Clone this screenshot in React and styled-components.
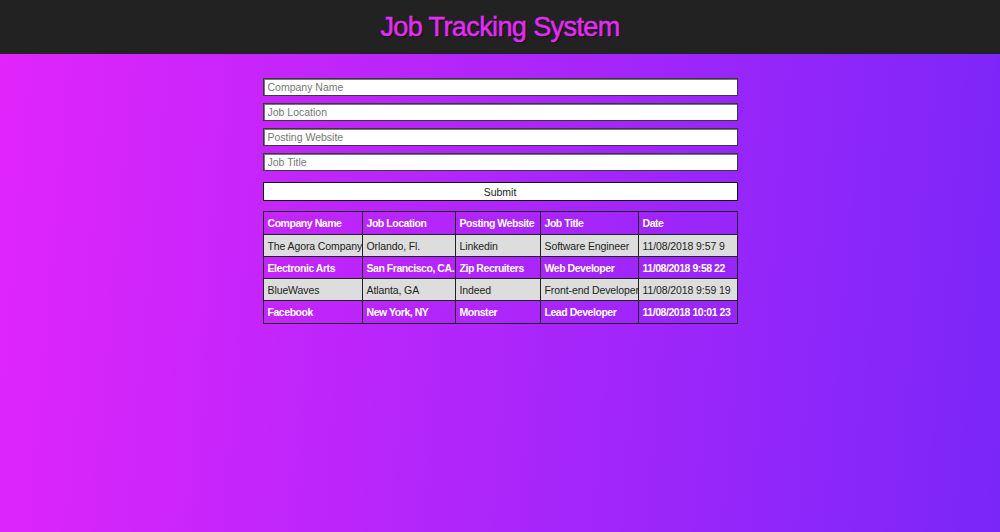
import React from "react";
import styled, { createGlobalStyle } from "styled-components";

const Global = createGlobalStyle`
  html, body { margin: 0; padding: 0; }
  body {
    font-family: "Liberation Sans", Arial, sans-serif;
    min-height: 532px;
    background: linear-gradient(95deg, #e125fb 0%, #7a26f9 100%);
    background-attachment: fixed;
  }
`;

const Page = styled.div`
  min-height: 532px;
  display: flex;
  flex-direction: column;
`;

const Header = styled.header`
  height: 54px;
  background: #222222;
  display: flex;
  align-items: center;
  justify-content: center;
`;

const Title = styled.h1`
  margin: 0;
  font-size: 27px;
  font-weight: normal;
  letter-spacing: -0.6px;
  color: #e02ef2;
  -webkit-text-stroke: 0.6px #e02ef2;
  text-shadow: 1px 1px 1px #000, -0.5px -0.5px 0.5px #111;
`;

const Main = styled.main`
  width: 475px;
  margin: 24px auto 0;
  display: flex;
  flex-direction: column;
`;

const Form = styled.form`
  display: flex;
  flex-direction: column;
  gap: 7px;
`;

const Input = styled.input`
  box-sizing: border-box;
  height: 18px;
  width: 100%;
  margin: 0;
  padding: 0 4px;
  border: 1px solid #3a3a3a;
  box-shadow: inset 1px 1px 0 #777;
  background: #fff;
  font-family: "Liberation Sans", Arial, sans-serif;
  font-size: 10.5px;
  color: #333;
  &::placeholder { color: #777; }
`;

const Submit = styled.button`
  box-sizing: border-box;
  height: 19px;
  width: 100%;
  margin: 4px 0 0;
  padding: 0;
  border: 1px solid #111;
  background: #fff;
  font-family: "Liberation Sans", Arial, sans-serif;
  font-size: 10.5px;
  color: #222;
`;

const Table = styled.table`
  margin-top: 10px;
  width: 475px;
  border-collapse: collapse;
  table-layout: fixed;
  border: 1px solid #222;
`;

const Row = styled.tr`
  background: ${(p) => (p.$light ? "#dddddd" : "transparent")};
  color: ${(p) => (p.$light ? "#222" : "#fff")};
  font-weight: ${(p) => (p.$light ? "normal" : "bold")};
  letter-spacing: ${(p) => (p.$light ? "-0.1px" : "-0.45px")};
`;

const Th = styled.th`
  border: 1px solid #222;
  height: 22px;
  padding: 0 1px 0 4px;
  text-align: left;
  font-size: 10.5px;
  font-weight: bold;
  color: #fff;
  white-space: nowrap;
  overflow: hidden;
`;

const Td = styled.td`
  border: 1px solid #222;
  height: ${(p) => (p.$last ? "22px" : "21px")};
  padding: 0 1px 0 4px;
  font-size: 10.5px;
  white-space: nowrap;
  overflow: hidden;
`;

const widths = [99, 93, 85, 98, 99];
const headers = ["Company Name", "Job Location", "Posting Website", "Job Title", "Date"];
const rows = [
  ["The Agora Company", "Orlando, Fl.", "Linkedin", "Software Engineer", "11/08/2018 9:57 9"],
  ["Electronic Arts", "San Francisco, CA.", "Zip Recruiters", "Web Developer", "11/08/2018 9:58 22"],
  ["BlueWaves", "Atlanta, GA", "Indeed", "Front-end Developer", "11/08/2018 9:59 19"],
  ["Facebook", "New York, NY", "Monster", "Lead Developer", "11/08/2018 10:01 23"],
];

export default function App() {
  return (
    <Page>
      <Global />
      <Header>
        <Title>Job Tracking System</Title>
      </Header>
      <Main>
        <Form onSubmit={(e) => e.preventDefault()}>
          <Input placeholder="Company Name" />
          <Input placeholder="Job Location" />
          <Input placeholder="Posting Website" />
          <Input placeholder="Job Title" />
          <Submit type="submit">Submit</Submit>
        </Form>
        <Table>
          <colgroup>
            {widths.map((w, i) => (
              <col key={i} style={{ width: w }} />
            ))}
          </colgroup>
          <thead>
            <Row>
              {headers.map((h) => (
                <Th key={h}>{h}</Th>
              ))}
            </Row>
          </thead>
          <tbody>
            {rows.map((r, i) => (
              <Row key={i} $light={i % 2 === 0}>
                {r.map((c, j) => (
                  <Td key={j} $last={i === rows.length - 1}>{c}</Td>
                ))}
              </Row>
            ))}
          </tbody>
        </Table>
      </Main>
    </Page>
  );
}
